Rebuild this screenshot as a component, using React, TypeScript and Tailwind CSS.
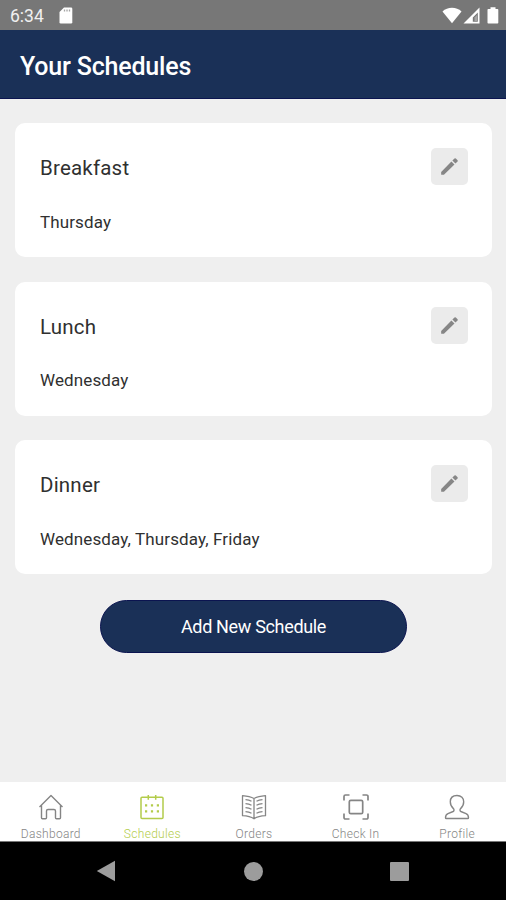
import React from 'react';

interface Schedule {
  name: string;
  days: string[];
}

const schedules: Schedule[] = [
  { name: 'Breakfast', days: ['Thursday'] },
  { name: 'Lunch', days: ['Wednesday'] },
  { name: 'Dinner', days: ['Wednesday', 'Thursday', 'Friday'] },
];

function StatusBar() {
  return (
    <div className="flex h-[30px] shrink-0 items-center justify-between bg-[#777777] pl-[10px] pr-[7px] text-white">
      <div className="flex items-center gap-[15px]">
        <span className="pt-[2px] text-[17.5px] leading-[30px] text-[#f0f0f0]">6:34</span>
        <svg width="14" height="17" viewBox="0 0 14 17">
          <path d="M5 .5h7a1.300 1.300 0 0 1 1.300 1.300v13.400a1.300 1.300 0 0 1-1.300 1.300H1.800A1.300 1.300 0 0 1 .5 15.200V5z" fill="currentColor" />
          <path d="M5.500 2.500v2M8 2.500v2M10.500 2.500v2" stroke="#a5a5a5" strokeWidth="1.300" />
        </svg>
      </div>
      <div className="flex items-center">
        <svg width="20" height="17" viewBox="0 0 20 17">
          <path d="M.5 4.500C5.500-.5 14.500-.5 19.500 4.500L10 16.200z" fill="currentColor" />
        </svg>
        <svg className="ml-px" width="17" height="17" viewBox="0 0 17 17">
          <path fillRule="evenodd" d="M16.500.5v16H.5zM14.800 5.500v9.300h-5V10.500z" fill="currentColor" />
          <path d="M11.500 10.500 14 8v6h-2.500z" fill="#a5a5a5" />
        </svg>
        <svg className="ml-[7px]" width="12" height="17" viewBox="0 0 12 17">
          <path d="M3.500.3h5v1.700H10.500q.8 0 .8.800v13q0 .8-.8.800H1.300q-.8 0-.8-.8v-13Q.5 2 1.300 2h2.200z" fill="currentColor" />
        </svg>
      </div>
    </div>
  );
}

function ScheduleCard({ schedule }: { schedule: Schedule }) {
  return (
    <div className="h-[134px] rounded-[10px] bg-white pl-[25px] pr-[24px] pt-[25px]">
      <div className="flex items-center justify-between">
        <h2 className="pt-[3px] text-[20.5px] leading-[34px] tracking-[0.2px] text-[#303030]">{schedule.name}</h2>
        <button className="flex h-[37px] w-[37px] items-center justify-center rounded-[5px] bg-[#ebebeb]">
          <svg width="23" height="23" viewBox="0 0 24 24" fill="#868686">
            <path d="M3.300 17.800v2.900h2.900L17.200 9.900l-3.200-3.200zM20.400 6.900a1 1 0 0 0 0-1.410l-1.800-1.800a1 1 0 0 0-1.410 0l-2.200 2.100 3.200 3.200z" />
          </svg>
        </button>
      </div>
      <p className="mt-[26.500px] text-[17px] leading-5 tracking-[0.12px] text-[#303030]">{schedule.days.join(', ')}</p>
    </div>
  );
}

function HomeIcon() {
  return (
    <svg width="26" height="26" viewBox="0 0 26 26" fill="none" stroke="currentColor" strokeWidth="1.400" strokeLinejoin="round">
      <path d="M1.500 13 13 1.500 24.500 13M3.500 11.500v12.300q0 1 1 1h3q1 0 1-1V17q0-1.500 1.500-1.500h6q1.500 0 1.500 1.500v6.800q0 1 1 1h3q1 0 1-1V11.500" />
    </svg>
  );
}

function CalendarIcon() {
  return (
    <svg width="26" height="26" viewBox="0 0 26 26" fill="none" stroke="currentColor" strokeWidth="1.500">
      <rect x="2" y="3.200" width="22" height="21.300" rx="1" />
      <path d="M9.300 1v4.800M16.700 1v4.800" />
      <path d="M6 11.300h2.200M11.900 11.300h2.200M17.800 11.300H20M6 17.300h2.200M11.900 17.300h2.200M17.800 17.300H20" strokeWidth="2.300" />
    </svg>
  );
}

function BookIcon() {
  return (
    <svg width="26" height="26" viewBox="0 0 26 26" fill="none" stroke="currentColor" strokeWidth="1.300" strokeLinejoin="round">
      <path d="M13 4.500Q9 2.500 1.500 1.700v20Q9 22 13 24.800q4-2.800 11.500-3.100v-20Q17 2.500 13 4.500zv20" />
      <path d="M4.500 5.700q3.500.2 6 1.600M4.500 9.700q3.500.2 6 1.600M4.500 13.700q3.500.2 6 1.600M4.500 17.700q3.500.2 6 1.600M21.500 5.700q-3.500.2-6 1.600M21.500 9.700q-3.500.2-6 1.600M21.500 13.700q-3.500.2-6 1.600M21.500 17.700q-3.500.2-6 1.600" />
    </svg>
  );
}

function ScanIcon() {
  return (
    <svg width="26" height="26" viewBox="0 0 26 26" fill="none" stroke="currentColor" strokeWidth="1.700">
      <path d="M1 6.500V2.500A1.500 1.500 0 0 1 2.500 1h4M19.500 1h4A1.500 1.500 0 0 1 25 2.500v4M25 19.500v4a1.500 1.500 0 0 1-1.500 1.500h-4M6.500 25h-4A1.500 1.500 0 0 1 1 23.500v-4" />
      <rect x="6.300" y="6.300" width="13.400" height="13.400" rx="1.500" />
    </svg>
  );
}

function ProfileIcon() {
  return (
    <svg width="26" height="26" viewBox="0 0 26 26" fill="none" stroke="currentColor" strokeWidth="1.400" strokeLinejoin="round">
      <path d="M13 1.500c-4.200 0-6.700 2.600-6.700 6.300 0 2.800 1.200 5.200 3.100 6.800.9.800.8 2.400-.3 2.900L4 19.600C2.300 20.400 1.500 22 1.500 23.700q0 .8.800.8h21.400q.8 0 .8-.8c0-1.700-.8-3.300-2.500-4.100l-5.100-2.100c-1.100-.5-1.200-2.100-.3-2.900 1.900-1.600 3.100-4 3.100-6.800 0-3.700-2.500-6.300-6.700-6.300z" />
    </svg>
  );
}

const tabs = [
  { label: 'Dashboard', icon: <HomeIcon /> },
  { label: 'Schedules', icon: <CalendarIcon />, active: true },
  { label: 'Orders', icon: <BookIcon /> },
  { label: 'Check In', icon: <ScanIcon /> },
  { label: 'Profile', icon: <ProfileIcon /> },
];

function TabBar() {
  return (
    <nav className="-mr-[2px] grid h-[60px] shrink-0 grid-cols-5 border-b border-[#777777] bg-white">
      {tabs.map((tab) => (
        <div
          key={tab.label}
          className={`flex flex-col items-center pt-[12px] ${tab.active ? 'text-[#b3cc4b]' : 'text-[#858585]'}`}
        >
          {tab.icon}
          <span className="mt-[7px] text-[12px] font-light leading-[14px] tracking-[0.3px]">{tab.label}</span>
        </div>
      ))}
    </nav>
  );
}

function NavigationBar() {
  return (
    <div className="flex h-[58px] shrink-0 items-center justify-between bg-black pl-[96px] pr-[97px] text-[#9c9c9c]">
      <svg width="20" height="22" viewBox="0 0 20 22" fill="currentColor">
        <path d="M.8 11 19 .8v20.400z" />
      </svg>
      <div className="h-[19px] w-[19px] rounded-full bg-current" />
      <div className="h-[19px] w-[19px] rounded-[1px] bg-current" />
    </div>
  );
}

export default function App() {
  return (
    <div className="flex h-[900px] w-[506px] flex-col overflow-hidden bg-[#efefef] font-['Roboto',sans-serif]">
      <StatusBar />
      <header className="flex h-[69px] shrink-0 items-center border-b border-[#0b1450] bg-[#1a3057] pl-5">
        <h1 className="pt-[5px] text-[25px] font-medium leading-[38px] tracking-[-0.18px] text-white">Your Schedules</h1>
      </header>
      <main className="flex flex-1 flex-col pl-[15px] pr-[14px] pt-[24.4px]">
        <div className="flex flex-col gap-[24.5px]">
          {schedules.map((schedule) => (
            <ScheduleCard key={schedule.name} schedule={schedule} />
          ))}
        </div>
        <button className="mt-[25.6px] h-[53px] w-[307px] self-center rounded-full border border-[#0b1450] bg-[#1a3057] pt-px text-[18px] tracking-[-0.33px] text-white">
          Add New Schedule
        </button>
      </main>
      <TabBar />
      <NavigationBar />
    </div>
  );
}
